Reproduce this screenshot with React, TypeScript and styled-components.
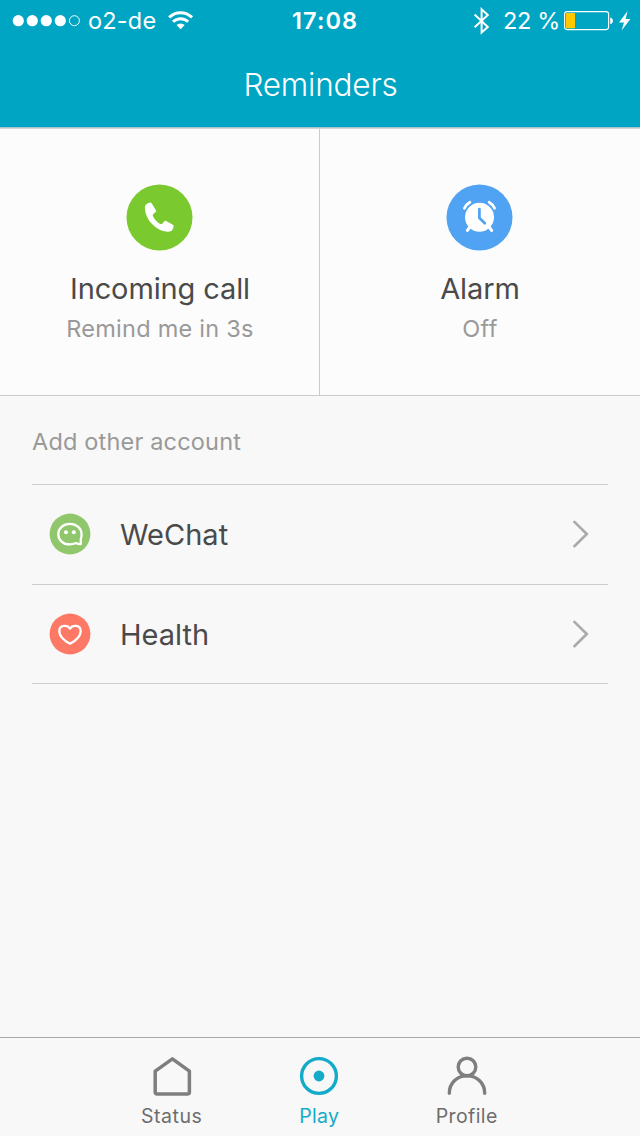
import React from "react";
import styled, { createGlobalStyle } from "styled-components";

const GlobalStyle = createGlobalStyle`
  * { box-sizing: border-box; }
  body { margin: 0; background: #f8f8f8; }
  svg { display: block; flex: none; }
`;

const Screen = styled.div`
  width: 640px;
  height: 1136px;
  display: flex;
  flex-direction: column;
  background: #f8f8f8;
  font-family: Inter, "Liberation Sans", sans-serif;
  color: #4a4a4a;
  white-space: nowrap;
`;

const Header = styled.header`
  height: 128px;
  background: #00a5c3;
  border-bottom: 1px solid #a8c6cc;
  color: #fff;
`;

const StatusBar = styled.div`
  display: grid;
  grid-template-columns: 280px 181px 1fr;
  height: 41px;
  align-items: center;
  font-size: 23.5px;
  line-height: 41px;
`;

const StatusGroup = styled.div`
  display: flex;
  align-items: center;
  height: 41px;
  padding-left: 12px;
`;

const StatusText = styled.span<{ $left: number; $width: number; $spacing: number }>`
  margin-left: ${(p) => p.$left}px;
  width: ${(p) => p.$width}px;
  letter-spacing: ${(p) => p.$spacing}px;
`;

const Clock = styled.span`
  padding-left: 12px;
  font-weight: 600;
  letter-spacing: 1.1px;
`;

const Title = styled.h1`
  margin: 0;
  height: 86px;
  font-size: 31.5px;
  line-height: 87px;
  font-weight: 350;
  letter-spacing: -0.2px;
  text-align: center;
  padding-left: 1px;
`;

const Cards = styled.section`
  display: flex;
  height: 268px;
  background: #fcfcfc;
  border-top: 1px solid #d4d4d4;
  border-bottom: 1px solid #cbcbcb;
`;

const Card = styled.div<{ $divided?: boolean }>`
  width: ${(p) => (p.$divided ? 320 : 319)}px;
  display: flex;
  flex-direction: column;
  align-items: center;
  padding-top: 55px;
  border-right: ${(p) => (p.$divided ? "1px solid #cbcbcb" : "none")};
`;

const CardTitle = styled.div<{ $spacing: number }>`
  margin-top: 18px;
  padding-left: 1px;
  font-size: 29px;
  line-height: 40px;
  letter-spacing: ${(p) => p.$spacing}px;
`;

const CardNote = styled.div<{ $spacing: number }>`
  padding-left: 1px;
  font-size: 23.5px;
  line-height: 40px;
  color: #999;
  letter-spacing: ${(p) => p.$spacing}px;
`;

const Accounts = styled.section`
  flex: 1;
  padding: 0 32px;
`;

const AccountsHeading = styled.h2`
  margin: 0;
  height: 89px;
  border-bottom: 1px solid #cecece;
  font-size: 23.5px;
  font-weight: 400;
  line-height: 92px;
  letter-spacing: 0.18px;
  color: #999;
`;

const Row = styled.div<{ $height: number }>`
  display: flex;
  height: ${(p) => p.$height}px;
  padding: 28px 19.5px 0 17px;
  border-bottom: 1px solid #cecece;
`;

const RowLabel = styled.span`
  flex: 1;
  margin-left: 29px;
  padding-top: 2px;
  font-size: 29px;
  line-height: 40px;
`;

const TabBar = styled.nav`
  display: flex;
  height: 99px;
  padding: 18px 0 0 98px;
  border-top: 1px solid #a9a9a9;
`;

const Tab = styled.div<{ $active?: boolean; $spacing: number }>`
  display: flex;
  flex-direction: column;
  align-items: center;
  width: 147.5px;
  font-size: 19.5px;
  line-height: 24px;
  gap: 6px;
  letter-spacing: ${(p) => p.$spacing}px;
  color: ${(p) => (p.$active ? "#14abc9" : "#6d6d6d")};
`;

const Signal = () => (
  <svg width="70" height="14" viewBox="0 0 70 14" fill="#fff">
    {[6.3, 20.3, 34.3, 48.3].map((x) => (
      <circle key={x} cx={x} cy="6.7" r="5.6" />
    ))}
    <circle cx="62.4" cy="6.7" r="5" fill="none" stroke="#fff" strokeWidth="1" />
  </svg>
);

const WifiMark = styled.svg`
  margin-bottom: 1px;
`;

const Wifi = () => (
  <WifiMark width="26" height="20" viewBox="0 0 26 20" fill="none" stroke="#fff" strokeWidth="3">
    <path d="M1.2 7.4a16.2 16.2 0 0 1 22.8 0" />
    <path d="M5 11.8a10.8 10.8 0 0 1 15.2 0" />
    <path d="M12.6 19.2l-4.1-4.2a6 6 0 0 1 8.2 0z" fill="#fff" stroke="none" />
  </WifiMark>
);

const Bluetooth = () => (
  <svg width="17" height="28" viewBox="0 0 17 28" fill="none" stroke="#fff" strokeWidth="2">
    <path d="M1.6 7.6L14.8 20 8.6 25.5V2.3L14.8 8 1.6 20.2" />
  </svg>
);

const Battery = () => (
  <svg width="50" height="20" viewBox="0 0 50 20">
    <rect x="0.6" y="0.6" width="44" height="18" rx="2.5" fill="none" stroke="#fff" strokeWidth="1.1" />
    <rect x="2" y="2" width="9" height="15.2" rx="0.8" fill="#ffc800" />
    <path d="M46.2 6.4c3.6.5 3.6 6.1 0 6.6z" fill="#fff" />
  </svg>
);

const BoltMark = styled.svg`
  margin-left: 5px;
`;

const Bolt = () => (
  <BoltMark width="12" height="20" viewBox="0 0 12 20" fill="#fff">
    <path d="M8.6 0L0 11.4h5L2.6 19.6 11.4 8H6.6z" />
  </BoltMark>
);

const PhoneIcon = () => (
  <svg width="67" height="67" viewBox="0 0 67 67">
    <circle cx="33.5" cy="33.5" r="33" fill="#7ac92f" />
    <path
      d="M19.4 21.2q2.2-2.6 4.9-2.6 1 0 1.5.8l4.2 7q.5.9-.3 1.6l-2.4 2q-.9.8-.4 2.1 2.3 5.3 6.4 7.3 1.9.9 3 .3l2.2-2.6q.6-.7 1.6-.2l6.8 3.8q.9.6.8 1.6-.3 3-2.4 4.6-1.2.8-4 .8-8.3-.3-15.3-7.6-6.4-6.7-7.1-15.4-.1-2.4.5-3.5z"
      fill="#fff"
    />
  </svg>
);

const AlarmIcon = () => (
  <svg width="67" height="67" viewBox="0 0 67 67" fill="none" strokeLinecap="round" strokeLinejoin="round">
    <circle cx="33.5" cy="33.5" r="33" fill="#4fa3f2" />
    <circle cx="33.5" cy="33.2" r="14.5" fill="#fff" />
    <path d="M18.4 24.2q1.5-3.7 5.5-6M48.6 24.2q-1.5-3.7-5.5-6" stroke="#fff" strokeWidth="2.8" />
    <path d="M24 43l-2.7 3.5M43 43l2.7 3.5" stroke="#fff" strokeWidth="2.9" />
    <path d="M33.4 25v9l5.4 5.2" stroke="#4fa3f2" strokeWidth="2.7" />
  </svg>
);

const WeChatIcon = () => (
  <svg width="42" height="42" viewBox="0 0 42 42">
    <circle cx="21" cy="21" r="20.4" fill="#90c76c" />
    <path
      d="M31.8 31.2v-5.2q.8-2 .8-4.6c0-6-5-10.6-11.7-10.6S9.3 15.3 9.3 21.2s5 10.2 11.600 10.200q3.500 0 6-1.300 2 1.100 4.900 1.100z"
      fill="none"
      stroke="#fff"
      strokeWidth="2.3"
      strokeLinejoin="round"
    />
    <circle cx="17" cy="19.2" r="2" fill="#fff" />
    <circle cx="24.8" cy="19.2" r="2" fill="#fff" />
  </svg>
);

const HealthIcon = () => (
  <svg width="42" height="42" viewBox="0 0 42 42">
    <circle cx="21" cy="21" r="20.4" fill="#fd7865" />
    <path
      d="M21 15.7c-2.7-4.5-10.7-3.7-10.7 2.5 0 5.2 4.2 9 10.7 12.6 6.5-3.6 10.7-7.4 10.7-12.6 0-6.2-8-7-10.7-2.5z"
      fill="none"
      stroke="#fff"
      strokeWidth="2.3"
      strokeLinejoin="round"
    />
  </svg>
);

const ChevronMark = styled.svg`
  margin-top: 7px;
`;

const Chevron = () => (
  <ChevronMark width="17" height="28" viewBox="0 0 17 28" fill="none" stroke="#aaa" strokeWidth="2.6" strokeLinecap="round">
    <path d="M2.4 1.9L14.8 14 2.4 26.2" />
  </ChevronMark>
);

const HomeIcon = () => (
  <svg width="40" height="42" viewBox="0 0 40 42" fill="none" stroke="#7e7e7e" strokeWidth="3.5" strokeLinejoin="round">
    <path d="M20.4 2.8L37.4 15.1V36q0 2-2 2H5.2q-2 0-2-2V15.1z" />
  </svg>
);

const PlayIcon = () => (
  <svg width="40" height="42" viewBox="0 0 40 42">
    <circle cx="20" cy="20" r="17.4" fill="none" stroke="#14abc9" strokeWidth="3.4" />
    <circle cx="20" cy="20" r="5.4" fill="#14abc9" />
  </svg>
);

const ProfileIcon = () => (
  <svg width="40" height="42" viewBox="0 0 40 42" fill="none" stroke="#7e7e7e" strokeWidth="3.4" strokeLinecap="round">
    <circle cx="20" cy="11" r="8.8" />
    <path d="M2.3 37.3C2.3 27 9.9 19.9 20 19.9S37.7 27 37.7 37.3" />
  </svg>
);

export default function App() {
  return (
    <Screen>
      <GlobalStyle />
      <Header>
        <StatusBar>
          <StatusGroup>
            <Signal />
            <StatusText $left={6} $width={80} $spacing={0.2}>o2-de</StatusText>
            <Wifi />
          </StatusGroup>
          <Clock>17:08</Clock>
          <StatusGroup>
            <Bluetooth />
            <StatusText $left={13} $width={61} $spacing={-0.3}>22 %</StatusText>
            <Battery />
            <Bolt />
          </StatusGroup>
        </StatusBar>
        <Title>Reminders</Title>
      </Header>
      <Cards>
        <Card $divided>
          <PhoneIcon />
          <CardTitle $spacing={-0.12}>Incoming call</CardTitle>
          <CardNote $spacing={0.25}>Remind me in 3s</CardNote>
        </Card>
        <Card>
          <AlarmIcon />
          <CardTitle $spacing={-0.1}>Alarm</CardTitle>
          <CardNote $spacing={0.4}>Off</CardNote>
        </Card>
      </Cards>
      <Accounts>
        <AccountsHeading>Add other account</AccountsHeading>
        <Row $height={100}>
          <WeChatIcon />
          <RowLabel>WeChat</RowLabel>
          <Chevron />
        </Row>
        <Row $height={99}>
          <HealthIcon />
          <RowLabel>Health</RowLabel>
          <Chevron />
        </Row>
      </Accounts>
      <TabBar>
        <Tab $spacing={0.55}>
          <HomeIcon />
          Status
        </Tab>
        <Tab $active $spacing={0.3}>
          <PlayIcon />
          Play
        </Tab>
        <Tab $spacing={0.4}>
          <ProfileIcon />
          Profile
        </Tab>
      </TabBar>
    </Screen>
  );
}
